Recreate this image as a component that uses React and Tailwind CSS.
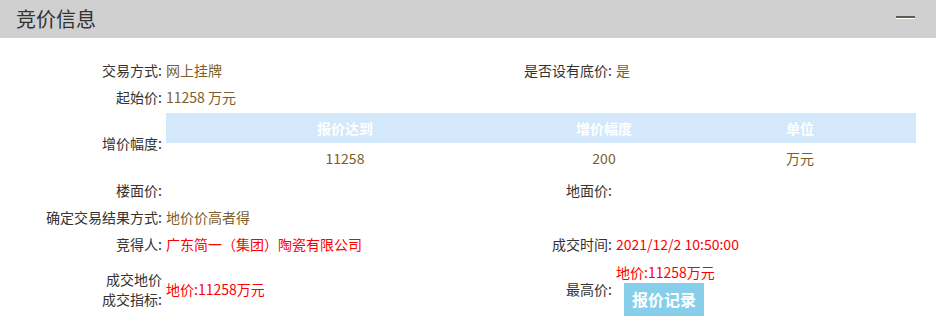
const font = { fontFamily: '"Noto Sans CJK SC", "Microsoft YaHei", sans-serif' };

function Label({ children, className = '' }) {
  return <div className={`text-right text-[#333] ${className}`}>{children}</div>;
}

function Value({ children, red, className = '' }) {
  return (
    <div className={`pl-[4px] ${red ? 'text-[#ff0000]' : 'text-[#7d5e2b]'} ${className}`}>{children}</div>
  );
}

export default function App() {
  return (
    <div className="w-[936px] h-[326px] bg-white overflow-hidden" style={font}>
      <div className="h-[38px] bg-[#d0d0d0] flex items-center justify-between pl-[16px] pr-[21px]">
        <h2 className="text-[20px] leading-[24px] text-[#333]">竞价信息</h2>
        <div className="w-[19px] mt-[-4px] border-t-[2px] border-b border-t-[#5c5c50] border-b-white" />
      </div>

      <div className="pt-[18px] text-[14px] leading-[20px] grid grid-cols-[162px_288px_162px_1fr] grid-rows-[27px_27px_66px_27px_27px_27px_63px] items-center">
        <Label>交易方式:</Label>
        <Value>网上挂牌</Value>
        <Label>是否设有底价:</Label>
        <Value>是</Value>

        <Label>起始价:</Label>
        <Value className="col-span-3">11258 万元</Value>

        <Label>增价幅度:</Label>
        <div className="col-span-3 pl-[4px] pr-[20px]">
          <div className="grid grid-cols-[358px_160px_1fr] text-center">
            <div className="h-[30px] bg-[#d3e8fb] text-white font-bold flex items-center justify-center">报价达到</div>
            <div className="h-[30px] bg-[#d3e8fb] text-white font-bold flex items-center justify-center">增价幅度</div>
            <div className="h-[30px] bg-[#d3e8fb] text-white font-bold flex items-center justify-center">单位</div>
            <div className="h-[30px] text-[#7d5e2b] flex items-center justify-center">11258</div>
            <div className="h-[30px] text-[#7d5e2b] flex items-center justify-center">200</div>
            <div className="h-[30px] text-[#7d5e2b] flex items-center justify-center">万元</div>
          </div>
        </div>

        <Label>楼面价:</Label>
        <Value></Value>
        <Label>地面价:</Label>
        <Value></Value>

        <Label>确定交易结果方式:</Label>
        <Value className="col-span-3">地价价高者得</Value>

        <Label>竞得人:</Label>
        <Value red>广东简一（集团）陶瓷有限公司</Value>
        <Label>成交时间:</Label>
        <Value red>2021/12/2 10:50:00</Value>

        <Label className="flex flex-col items-end">
          <span>成交地价</span>
          <span>成交指标:</span>
        </Label>
        <Value red>地价:11258万元</Value>
        <Label>最高价:</Label>
        <div className="pl-[4px] flex flex-col">
          <span className="text-[#ff0000]">地价:11258万元</span>
          <button className="ml-[8px] mt-[1px] w-[80px] h-[33px] bg-[#87ceeb] text-white font-bold text-[16px]">
            报价记录
          </button>
        </div>
      </div>
    </div>
  );
}
